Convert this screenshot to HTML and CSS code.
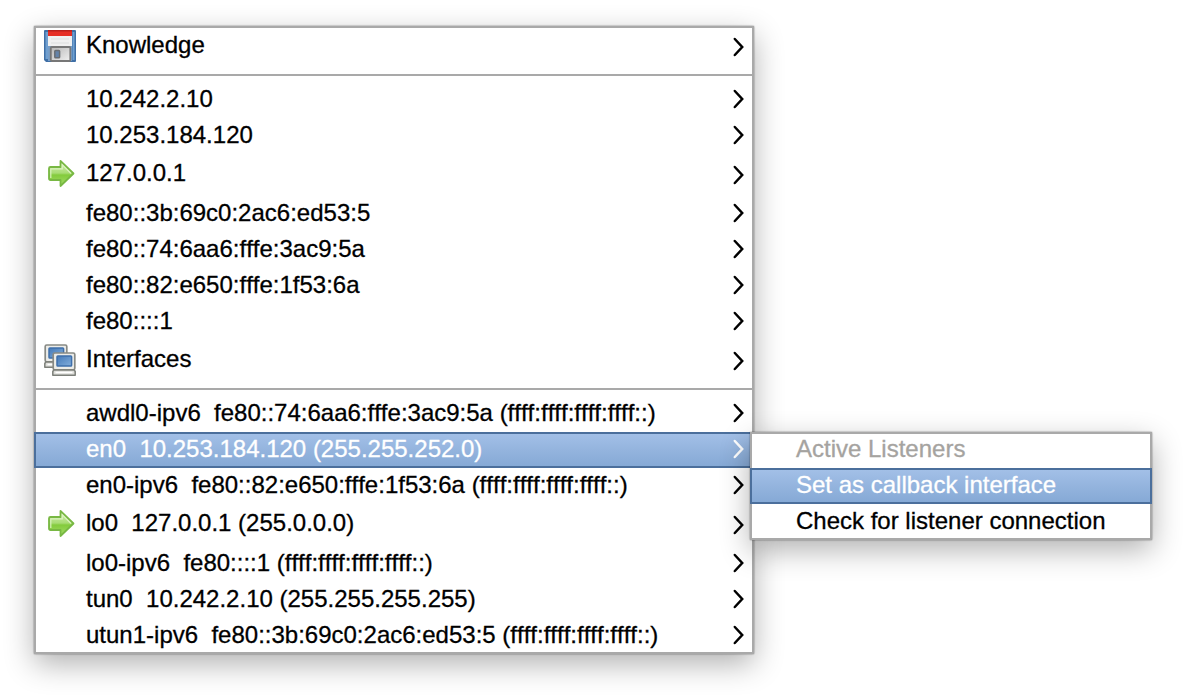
FILE: index.html
```html
<!DOCTYPE html>
<html lang="en">
<head>
<meta charset="utf-8">
<title>Listener menu</title>
<link rel="stylesheet" href="styles.css">
</head>
<body>
<svg class="defs" width="0" height="0" aria-hidden="true">
  <defs>
    <linearGradient id="blue" x1="0" y1="0" x2="1" y2="1"><stop offset="0" stop-color="#4479b8"/><stop offset="1" stop-color="#82aedb"/></linearGradient>
    <linearGradient id="green" x1="0" y1="0" x2="0" y2="1"><stop offset="0" stop-color="#d6f0b4"/><stop offset=".48" stop-color="#a9dc75"/><stop offset=".56" stop-color="#83cb3c"/><stop offset="1" stop-color="#a4dc68"/></linearGradient>
    <linearGradient id="metal" x1="0" y1="0" x2="1" y2="1"><stop offset="0" stop-color="#b5b5b5"/><stop offset="1" stop-color="#f1f1f1"/></linearGradient>
    <symbol id="chevron" viewBox="0 0 12 20"><path d="M2.800 2l7.400 8-7.400 8" fill="none" stroke="currentColor" stroke-width="2.500" stroke-linecap="round" stroke-linejoin="miter"/></symbol>
    <symbol id="arrow" viewBox="0 0 32 32"><path d="M5 10.500q0-1.500 1.500-1.500H16.500V3L29.500 15.500 16.500 28V22H6.500Q5 22 5 20.500z" fill="url(#green)" stroke="#78b843" stroke-width="1.800" stroke-linejoin="round"/><path d="M6.800 20V10.800h11.500V6.800L27 15.500" fill="none" stroke="#d9f2bd" stroke-width="1.200"/></symbol>
    <symbol id="floppy" viewBox="0 0 32 32">
      <path d="M1 0h30Q32 0 32 1V31Q32 32 31 32H2L0 30V1Q0 0 1 0z" fill="#3f6fa6"/>
      <path d="M1.500 2H4v27H1.500zM28.500 2h2v28h-2z" fill="#6f9fd0"/>
      <path d="M4 0h24v16H4z" fill="#f0f0f0"/><path d="M4 0h24v6H4z" fill="#e62e24"/><path d="M4 0h24v1.500H4z" fill="#b91e1a"/>
      <path d="M7 9h18M7 13h18" stroke="#dcdede" stroke-width="1.200"/>
      <path d="M4 16h24v15H4z" fill="#779dc7"/>
      <rect x="6.800" y="17" width="19.500" height="14" rx="1" fill="url(#metal)" stroke="#777" stroke-width="1.800"/>
      <rect x="10.800" y="20.500" width="4.800" height="7.200" rx=".8" fill="#6483a9" stroke="#686d73" stroke-width="1.500"/>
    </symbol>
    <symbol id="monitor" viewBox="0 0 24 24">
      <rect x="1.200" y="1" width="21.600" height="16.800" rx="1.500" fill="#ecece8" stroke="#888a85" stroke-width="1.700"/>
      <rect x="5" y="4" width="14.600" height="10" rx=".8" fill="url(#blue)" stroke="#3e6fab" stroke-width="1.500"/>
      <path d="M1.800 18h20.400L23.200 19.500v3.700H.8v-3.700z" fill="#dededa" stroke="#7d807a" stroke-width="1.500" stroke-linejoin="round"/><path d="M3.500 20.500h17" stroke="#fff" stroke-width="1.500"/>
    </symbol>
    <symbol id="interfaces" viewBox="0 0 32 32"><use href="#monitor" x="0" y="0" width="24" height="24"/><use href="#monitor" x="8" y="8" width="24" height="24"/></symbol>
  </defs>
</svg>
<main class="desktop">
  <nav class="menu main-menu">
    <div class="row tall"><svg class="icon"><use href="#floppy"/></svg><span class="label">Knowledge</span><svg class="chevron"><use href="#chevron"/></svg></div>
    <div class="separator"></div>
    <div class="row"><span class="label">10.242.2.10</span><svg class="chevron"><use href="#chevron"/></svg></div>
    <div class="row"><span class="label">10.253.184.120</span><svg class="chevron"><use href="#chevron"/></svg></div>
    <div class="row tall"><svg class="icon"><use href="#arrow"/></svg><span class="label">127.0.0.1</span><svg class="chevron"><use href="#chevron"/></svg></div>
    <div class="row"><span class="label">fe80::3b:69c0:2ac6:ed53:5</span><svg class="chevron"><use href="#chevron"/></svg></div>
    <div class="row"><span class="label">fe80::74:6aa6:fffe:3ac9:5a</span><svg class="chevron"><use href="#chevron"/></svg></div>
    <div class="row"><span class="label">fe80::82:e650:fffe:1f53:6a</span><svg class="chevron"><use href="#chevron"/></svg></div>
    <div class="row"><span class="label">fe80::::1</span><svg class="chevron"><use href="#chevron"/></svg></div>
    <div class="row tall"><svg class="icon"><use href="#interfaces"/></svg><span class="label">Interfaces</span><svg class="chevron"><use href="#chevron"/></svg></div>
    <div class="separator"></div>
    <div class="row"><span class="label">awdl0-ipv6  fe80::74:6aa6:fffe:3ac9:5a (ffff:ffff:ffff:ffff::)</span><svg class="chevron"><use href="#chevron"/></svg></div>
    <div class="row selected"><span class="label">en0  10.253.184.120 (255.255.252.0)</span><svg class="chevron"><use href="#chevron"/></svg></div>
    <div class="row"><span class="label">en0-ipv6  fe80::82:e650:fffe:1f53:6a (ffff:ffff:ffff:ffff::)</span><svg class="chevron"><use href="#chevron"/></svg></div>
    <div class="row tall"><svg class="icon"><use href="#arrow"/></svg><span class="label">lo0  127.0.0.1 (255.0.0.0)</span><svg class="chevron"><use href="#chevron"/></svg></div>
    <div class="row"><span class="label">lo0-ipv6  fe80::::1 (ffff:ffff:ffff:ffff::)</span><svg class="chevron"><use href="#chevron"/></svg></div>
    <div class="row"><span class="label">tun0  10.242.2.10 (255.255.255.255)</span><svg class="chevron"><use href="#chevron"/></svg></div>
    <div class="row"><span class="label">utun1-ipv6  fe80::3b:69c0:2ac6:ed53:5 (ffff:ffff:ffff:ffff::)</span><svg class="chevron"><use href="#chevron"/></svg></div>
  </nav>
  <nav class="menu submenu">
    <div class="row disabled"><span class="label">Active Listeners</span></div>
    <div class="row selected"><span class="label">Set as callback interface</span></div>
    <div class="row"><span class="label">Check for listener connection</span></div>
  </nav>
</main>
</body>
</html>
```
FILE: styles.css
```css
* { box-sizing: border-box; }
body { margin: 0; background: #fff; color: #000; font-family: "Liberation Sans", Arial, sans-serif; font-size: 24px; }
.defs { position: absolute; }
.desktop { position: relative; width: 1186px; height: 696px; overflow: hidden; }
.menu { position: absolute; background: #fff; border-radius: 2px; box-shadow: 0 0 1px 1px rgba(0,0,0,.16), 0 10px 30px rgba(0,0,0,.31); }
.menu::before { content: ""; position: absolute; inset: 0; border: 2px solid #a9a9a9; pointer-events: none; }
.main-menu { left: 34px; top: 26px; width: 720px; }
.submenu { left: 750px; top: 432px; width: 402px; }
.row { position: relative; display: grid; grid-template-columns: 52px 1fr 22px; height: 36px; }
.tall { height: 42px; }
.label { grid-column: 2; grid-row: 1; line-height: 34px; white-space: pre; font-variant-ligatures: none; font-kerning: none; -webkit-text-stroke: .3px currentColor; }
.tall .label { line-height: 38px; }
.icon { grid-column: 1; grid-row: 1; width: 32px; height: 32px; margin: 4px 0 0 10px; }
.chevron { grid-column: 3; grid-row: 1; width: 12px; height: 20px; margin-top: 7px; }
.tall .chevron { margin-top: 11px; }
.separator { height: 14px; padding: 6px 2px; }
.separator::before { content: ""; display: block; height: 2px; background: #a9a9a9; }
.selected { color: #fff; background: linear-gradient(#a4c1e8, #94b4de 50%, #84a8d5); box-shadow: inset 0 0 0 2px #4b6f9c; }
.submenu .row { grid-template-columns: 46px 1fr; }
.disabled { color: #a5a3a0; }
```
